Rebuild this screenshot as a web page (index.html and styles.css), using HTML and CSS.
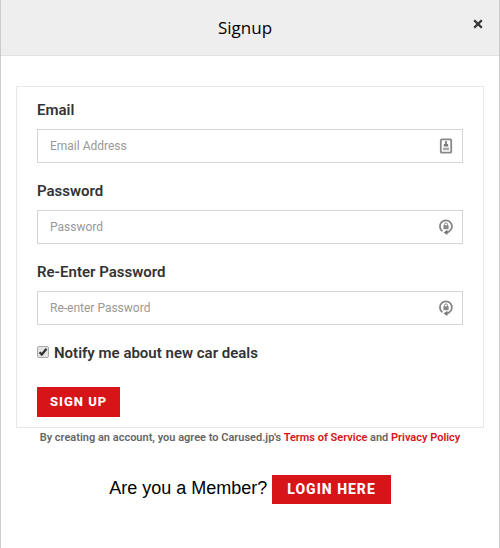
FILE: index.html
```html
<!DOCTYPE html>
<html lang="en">
<head>
  <meta charset="UTF-8">
  <meta name="viewport" content="width=device-width, initial-scale=1.0">
  <title>Signup</title>
  <link rel="stylesheet" href="styles.css">
</head>
<body>
  <div class="modal">
    <header class="modal-header">
      <h1 class="modal-title">Signup</h1>
      <button type="button" class="close" aria-label="Close">
        <svg width="10" height="10" viewBox="0 0 10 10">
          <path d="M1.2 1.2l7.6 7.6M8.8 1.2L1.2 8.8" stroke="#333" stroke-width="2.3" />
        </svg>
      </button>
    </header>

    <main class="modal-body">
      <form class="signup-form">
        <div class="form-group">
          <label for="email">Email</label>
          <div class="field">
            <input type="email" id="email" placeholder="Email Address">
            <svg class="field-icon" width="16" height="16" viewBox="0 0 16 16">
              <rect x="2.8" y="1.3" width="10.4" height="13.4" rx="1" fill="#fff" stroke="#888" stroke-width="1.8" />
              <path d="M7.2 3h1.6v2.4l1.4 1.2v2H5.8v-2l1.4-1.2z" fill="#777" />
              <path d="M5 9.6h6v2.6H5z" fill="#aaa" />
            </svg>
          </div>
        </div>

        <div class="form-group">
          <label for="password">Password</label>
          <div class="field">
            <input type="password" id="password" placeholder="Password">
            <svg class="field-icon" width="16" height="16" viewBox="0 0 16 16">
              <path d="M4.4 12.2A6 6 0 1 1 10.8 12.6L8.6 13.6" fill="none" stroke="#858585" stroke-width="1.8" />
              <path d="M9.4 10.8v5.2L5.6 13.4z" fill="#757575" />
              <path d="M6.5 7V5.4a1.5 1.5 0 0 1 3 0V7" fill="none" stroke="#888" />
              <rect x="5.4" y="6.2" width="5.2" height="4" fill="#888" />
            </svg>
          </div>
        </div>

        <div class="form-group">
          <label for="password-again">Re-Enter Password</label>
          <div class="field">
            <input type="password" id="password-again" placeholder="Re-enter Password">
            <svg class="field-icon" width="16" height="16" viewBox="0 0 16 16">
              <path d="M4.4 12.2A6 6 0 1 1 10.8 12.6L8.6 13.6" fill="none" stroke="#858585" stroke-width="1.8" />
              <path d="M9.4 10.8v5.2L5.6 13.4z" fill="#757575" />
              <path d="M6.5 7V5.4a1.5 1.5 0 0 1 3 0V7" fill="none" stroke="#888" />
              <rect x="5.4" y="6.2" width="5.2" height="4" fill="#888" />
            </svg>
          </div>
        </div>

        <div class="checkbox">
          <input type="checkbox" id="notify" checked>
          <label for="notify">Notify me about new car deals</label>
        </div>

        <button type="submit" class="btn btn-signup">SIGN UP</button>
      </form>

      <p class="terms">By creating an account, you agree to Carused.jp's <a href="#">Terms of Service</a> and <a href="#">Privacy Policy</a></p>

      <div class="member">
        <span>Are you a Member?</span>
        <a href="#" class="btn btn-login">LOGIN HERE</a>
      </div>
    </main>
  </div>
</body>
</html>
```
FILE: styles.css
```css
* {
  box-sizing: border-box;
}

body {
  margin: 0;
  background-color: #fff;
  color: #333;
  font-family: Roboto, Arial, sans-serif;
  font-size: 15px;
}

.modal {
  min-height: 100vh;
  border: solid #ccc;
  border-width: 0 1px;
}

/* Header */
.modal-header {
  display: grid;
  grid-template-columns: 30px 1fr 40px;
  height: 56px;
  background-color: #eee;
  border-bottom: 1px solid #e2e2e2;
}

.modal-title {
  grid-column: 2;
  align-self: center;
  margin: 0;
  color: #000;
  font-family: "Open Sans", sans-serif;
  font-size: 17px;
  font-weight: 400;
  text-align: center;
}

.close {
  align-self: start;
  justify-self: end;
  display: flex;
  margin-top: 9px;
  padding: 10px 16px;
  border: none;
  background: transparent;
  cursor: pointer;
}

.modal-body {
  padding: 30px 15px;
}

/* Form */
.signup-form {
  padding: 13px 20px 10px;
  border: 1px solid #e7e7e7;
}

.form-group {
  margin-bottom: 18px;
}

label {
  font-weight: 600;
  line-height: 20px;
}

.form-group label {
  display: block;
  margin-bottom: 9px;
}

.field {
  position: relative;
}

.field input {
  display: block;
  width: 100%;
  height: 34px;
  padding: 6px 36px 6px 12px;
  border: 1px solid #d5d5d5;
  border-radius: 0;
  background-color: #fff;
  color: #555;
  font-family: inherit;
  font-size: 12px;
}

.field input::placeholder {
  color: #999;
}

.field-icon {
  position: absolute;
  top: 9px;
  right: 9px;
}

.checkbox {
  display: flex;
  align-items: center;
  gap: 5px;
  margin-bottom: 24px;
}

.checkbox input {
  appearance: none;
  width: 12px;
  height: 12px;
  margin: 0 0 3px;
  border: 1px solid #aaa;
  border-radius: 2px;
  background: #e4e4e4 url("data:image/svg+xml,%3Csvg xmlns='http://www.w3.org/2000/svg' viewBox='0 0 10 10'%3E%3Cpath d='M1.5 5.2l2.3 2.3L8.5 1.8' fill='none' stroke='%23333' stroke-width='2.2'/%3E%3C/svg%3E") center / 10px no-repeat;
}

.checkbox input:not(:checked) {
  background-image: none;
}

/* Buttons */
.btn {
  display: inline-block;
  border: none;
  background-color: #d71418;
  color: #fff;
  font-family: inherit;
  font-weight: 800;
  letter-spacing: 1px;
  text-decoration: none;
  cursor: pointer;
}

.btn-signup {
  display: block;
  padding: 5px 13px;
  font-size: 13px;
  line-height: 20px;
}

.btn-login {
  padding: 4px 15px;
  font-size: 14px;
  line-height: 21px;
}

.terms {
  margin: 0;
  color: #666;
  font-size: 11px;
  font-weight: 600;
  line-height: 19px;
  text-align: center;
}

.terms a {
  color: #d71418;
  text-decoration: none;
}

.member {
  display: flex;
  flex-wrap: wrap;
  justify-content: center;
  align-items: center;
  gap: 5px;
  margin-top: 28px;
  color: #000;
}

.member span {
  margin-bottom: 4px;
  font-family: "Liberation Sans", Arial, sans-serif;
  font-size: 18px;
  line-height: 22px;
}
```
